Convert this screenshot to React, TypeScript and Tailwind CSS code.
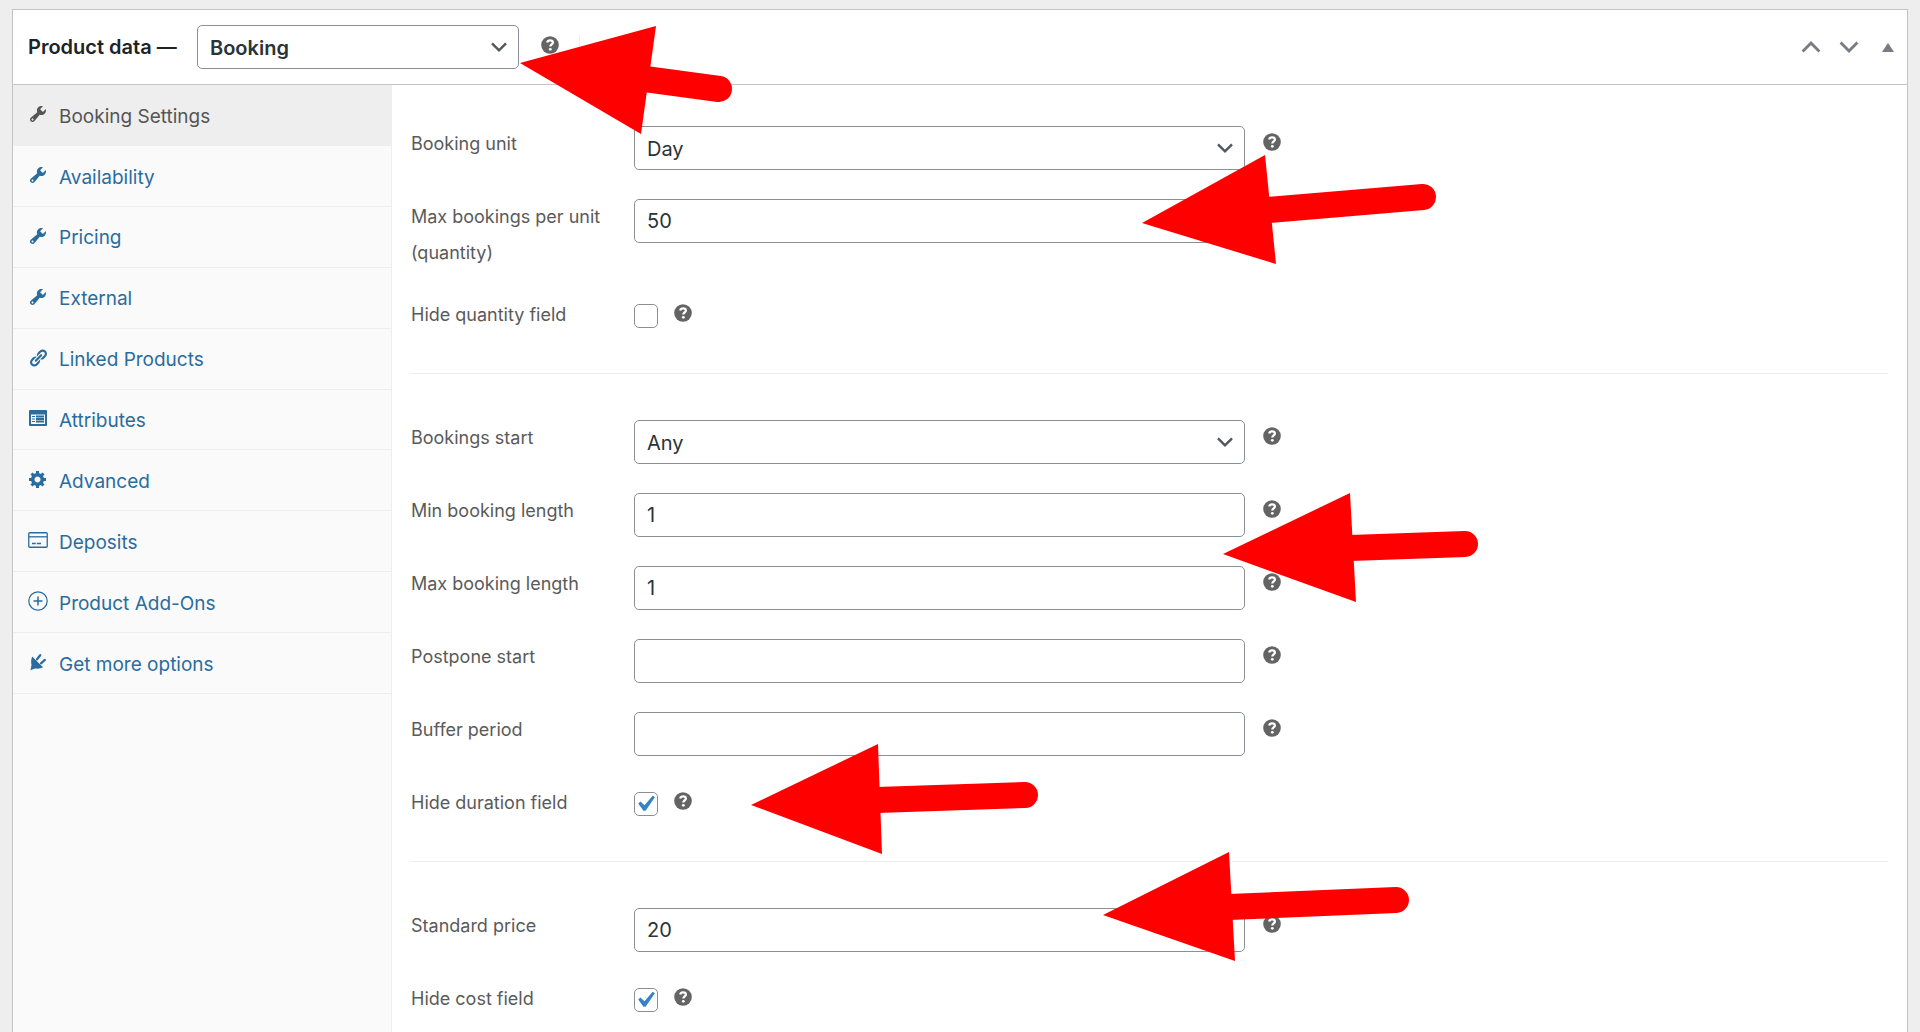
import * as React from 'react';

type IconProps = {className?: string};

type Tab = {
  label: string;
  icon: React.ComponentType<IconProps>;
};

function WrenchIcon({className}: IconProps) {
  return (
    <svg viewBox="0 0 20 20" fill="currentColor" aria-hidden="true" className={className}>
      <path d="M16.68 9.77c-1.34 1.34-3.3 1.67-4.95.99l-5.41 6.52c-.99.99-2.59.99-3.58 0s-.99-2.59 0-3.57l6.52-5.42c-.68-1.65-.35-3.61.99-4.95 1.28-1.28 3.12-1.62 4.72-1.06l-2.89 2.89 2.82 2.82 2.86-2.87c.53 1.58.18 3.39-1.08 4.65zM3.81 16.21c.4.39 1.04.39 1.43 0 .4-.4.4-1.04 0-1.43-.39-.4-1.03-.4-1.43 0-.39.39-.39 1.03 0 1.43z" />
    </svg>
  );
}

function LinkIcon({className}: IconProps) {
  return (
    <svg viewBox="0 0 20 20" fill="currentColor" aria-hidden="true" className={className}>
      <path d="M17.74 2.76c1.68 1.69 1.68 4.41 0 6.1l-1.53 1.52c-1.12 1.12-2.7 1.47-4.14 1.09l2.62-2.61.76-.77.76-.76c.84-.84.84-2.2 0-3.04-.84-.85-2.2-.85-3.04 0l-.77.76-3.38 3.38c-.37-1.44-.02-3.02 1.1-4.14l1.52-1.53c1.69-1.68 4.42-1.68 6.1 0zM8.59 13.43l5.34-5.34c.42-.42.42-1.1 0-1.52-.44-.43-1.13-.39-1.53 0l-5.33 5.34c-.42.42-.42 1.1 0 1.52.44.43 1.13.39 1.52 0zm-.76 2.29l4.14-4.15c.38 1.44.03 3.02-1.09 4.14l-1.52 1.53c-1.69 1.68-4.41 1.68-6.1 0-1.68-1.68-1.68-4.42 0-6.1l1.53-1.52c1.12-1.12 2.7-1.47 4.14-1.1l-4.14 4.15c-.85.84-.85 2.2 0 3.05.84.84 2.2.84 3.04 0z" />
    </svg>
  );
}

function AttributesIcon({className}: IconProps) {
  return (
    <svg viewBox="0 0 20 20" fill="none" aria-hidden="true" className={className}>
      <rect x="1" y="2" width="18" height="16" rx="1" fill="currentColor" />
      <path d="M3 6.500h14v9.500H3z" fill="#fafafa" />
      <path d="M4 8.500h3M4 11h3M4 13.500h3" stroke="currentColor" strokeWidth="1" />
      <path d="M8 8.500h8M8 11h8M8 13.500h8" stroke="currentColor" strokeWidth="1.800" />
    </svg>
  );
}

function GearIcon({className}: IconProps) {
  return (
    <svg viewBox="0 0 20 20" fill="currentColor" aria-hidden="true" className={className}>
      <path d="M18 12h-2.18c-.17.7-.44 1.35-.81 1.93l1.54 1.54-2.1 2.1-1.54-1.54c-.58.36-1.23.63-1.91.79V19H8v-2.18c-.68-.16-1.33-.43-1.91-.79l-1.54 1.54-2.12-2.12 1.54-1.54c-.36-.58-.63-1.23-.79-1.91H1V9.03h2.17c.16-.7.44-1.35.8-1.94L2.43 5.55l2.1-2.1 1.54 1.54c.58-.37 1.24-.64 1.93-.81V2h3v2.18c.68.16 1.33.43 1.91.79l1.54-1.54 2.12 2.12-1.54 1.54c.36.59.64 1.24.8 1.94H18V12zm-8.5 1.5c1.66 0 3-1.34 3-3s-1.34-3-3-3-3 1.34-3 3 1.34 3 3 3z" />
    </svg>
  );
}

function CardIcon({className}: IconProps) {
  return (
    <svg viewBox="0 0 20 20" fill="none" stroke="currentColor" aria-hidden="true" className={className}>
      <rect x="0.75" y="2.750" width="18.500" height="14.500" rx="1" strokeWidth="1.300" />
      <path d="M1 6.800h18" strokeWidth="1.300" />
      <path d="M4 13.500h3.800M8.800 13.500h4.200" strokeWidth="1.300" />
    </svg>
  );
}

function PlusCircleIcon({className}: IconProps) {
  return (
    <svg viewBox="0 0 20 20" fill="none" stroke="currentColor" aria-hidden="true" className={className}>
      <circle cx="10" cy="10" r="9.200" strokeWidth="1.200" />
      <path d="M10 5.500v9M5.500 10h9" strokeWidth="1.500" />
    </svg>
  );
}

function PlugIcon({className}: IconProps) {
  return (
    <svg viewBox="0 0 20 20" fill="currentColor" aria-hidden="true" className={className}>
      <path d="M4.200 4.500 15 15.300c-2.200 1.200-5 1.600-8 1.200L2.500 18.200l1-5.200c-.6-3-.4-6 .7-8.500z" />
      <path d="m9 7.300 3.200-4.100M13 11.300l3.900-3.400" stroke="currentColor" strokeWidth="2.200" strokeLinecap="round" />
    </svg>
  );
}

function HelpTip() {
  return (
    <button type="button" aria-label="Help" className="mt-[7px] size-[18px] shrink-0 text-[#646464]">
      <svg viewBox="0 0 18 18" fill="none" aria-hidden="true" className="size-[18px]">
        <circle cx="9" cy="9" r="8.800" fill="currentColor" />
        <path d="M6.200 6.500c.3-1.400 1.400-2.200 2.900-2.200 1.700 0 2.800.9 2.800 2.200 0 1.800-2.600 1.900-2.600 3.900" stroke="#fff" strokeWidth="2.300" />
        <circle cx="9.300" cy="13.300" r="1.400" fill="#fff" />
      </svg>
    </button>
  );
}

function Chevron({className}: IconProps) {
  return (
    <svg viewBox="0 0 16 10" fill="none" stroke="currentColor" strokeWidth="2.400" aria-hidden="true" className={className}>
      <path d="m1 1.300 7 7 7-7" />
    </svg>
  );
}

const TABS: Tab[] = [
  {label: 'Booking Settings', icon: WrenchIcon},
  {label: 'Availability', icon: WrenchIcon},
  {label: 'Pricing', icon: WrenchIcon},
  {label: 'External', icon: WrenchIcon},
  {label: 'Linked Products', icon: LinkIcon},
  {label: 'Attributes', icon: AttributesIcon},
  {label: 'Advanced', icon: GearIcon},
  {label: 'Deposits', icon: CardIcon},
  {label: 'Product Add-Ons', icon: PlusCircleIcon},
  {label: 'Get more options', icon: PlugIcon},
];

function SelectBox({id, options, bold}: {id: string; options: string[]; bold?: boolean}) {
  return (
    <div className="relative w-full">
      <select
        id={id}
        className={`h-11 w-full appearance-none rounded-[5px] border border-[#8c8f94] bg-white pt-0.5 pr-10 pl-3 text-xl text-[#2c3338] ${bold ? 'font-semibold' : ''}`}
      >
        {options.map((option) => (
          <option key={option}>{option}</option>
        ))}
      </select>
      <Chevron className="pointer-events-none absolute top-[17px] right-3 h-[10px] w-4 text-[#50575e]" />
    </div>
  );
}

function Row({id, label, children}: {id: string; label: string; children: React.ReactNode}) {
  return (
    <div className="flex min-h-[47px] items-start">
      <label htmlFor={id} className="w-[223px] shrink-0 pr-5 text-lg leading-9 text-[#5a5a5a]">
        {label}
      </label>
      {children}
    </div>
  );
}

function SelectRow({id, label, options}: {id: string; label: string; options: string[]}) {
  return (
    <Row id={id} label={label}>
      <div className="flex w-full max-w-[647px] gap-[18px]">
        <SelectBox id={id} options={options} />
        <HelpTip />
      </div>
    </Row>
  );
}

function TextRow({id, label, value = '', help = true}: {id: string; label: string; value?: string; help?: boolean}) {
  return (
    <Row id={id} label={label}>
      <div className="flex w-full max-w-[647px] gap-[18px]">
        <input
          id={id}
          type="text"
          defaultValue={value}
          className="h-11 w-full max-w-[611px] rounded-[5px] border border-[#8c8f94] bg-white px-3 text-xl text-[#2c3338]"
        />
        {help && <HelpTip />}
      </div>
    </Row>
  );
}

function CheckRow({id, label, checked = false}: {id: string; label: string; checked?: boolean}) {
  return (
    <Row id={id} label={label}>
      <div className="flex gap-4">
        <span className="relative mt-[7px] size-6">
          <input
            id={id}
            type="checkbox"
            defaultChecked={checked}
            className="peer block size-6 appearance-none rounded-[5px] border border-[#8c8f94] bg-white"
          />
          <svg
            viewBox="0 0 20 20"
            aria-hidden="true"
            className="pointer-events-none absolute -top-1 -left-[5px] hidden size-8 peer-checked:block"
          >
            <path d="M14.830 4.890l1.340.940-5.810 8.380H9.020L5.780 9.670l1.340-1.250 2.570 2.400z" fill="#3582c4" />
          </svg>
        </span>
        <HelpTip />
      </div>
    </Row>
  );
}

// Callouts drawn over the panel: head polygon plus a round-capped shaft.
const ARROWS = [
  {head: '520,63 656,26 641,134', shaft: 'M645 79 719 89'},
  {head: '1142,223 1265,155 1276,264', shaft: 'M1268 210 1423 197'},
  {head: '1223,554 1350,493 1356,602', shaft: 'M1350 548 1465 544'},
  {head: '751,805 878,744 882,854', shaft: 'M877 800 1025 795'},
  {head: '1103,915 1229,852 1235,961', shaft: 'M1229 907 1396 900'},
];

export default function App() {
  return (
    <div className="relative flex h-screen flex-col overflow-hidden bg-[#eeeeee] px-3 pt-[9px] font-['Inter',sans-serif]">
      <section className="flex grow flex-col border border-b-0 border-[#c3c4c7] bg-white">
        <header className="flex h-[75px] shrink-0 items-center border-b border-[#c3c4c7] pr-[13px] pl-[15px]">
          <label htmlFor="product-type" className="w-[169px] shrink-0 text-xl font-semibold whitespace-nowrap text-[#1d2327]">
            Product data —
          </label>
          <div className="w-[322px]">
            <SelectBox id="product-type" options={['Booking', 'Simple product', 'Variable product']} bold />
          </div>
          <div className="ml-[22px] flex h-9 gap-5">
            <HelpTip />
            <span className="mt-1.5 h-5 w-px bg-[#eeeeee]" />
          </div>
          <div className="ml-auto flex items-center gap-[18px] text-[#787c82]">
            <button type="button" aria-label="Move up">
              <Chevron className="h-3 w-5 rotate-180" />
            </button>
            <button type="button" aria-label="Move down">
              <Chevron className="h-3 w-5" />
            </button>
            <button type="button" aria-label="Toggle panel" className="ml-[5px]">
              <svg viewBox="0 0 12 9" fill="currentColor" aria-hidden="true" className="h-[9px] w-3">
                <path d="M6 0 12 9H0z" />
              </svg>
            </button>
          </div>
        </header>

        <div className="flex grow">
          <nav className="w-[379px] shrink-0 border-r border-[#eeeeee] bg-[#fafafa]">
            <ul className="grid h-[609px] auto-rows-fr">
              {TABS.map(({label, icon: Icon}, i) => (
                <li key={label} className="border-b border-[#eeeeee]">
                  <a
                    href="#"
                    className={`flex h-full items-center gap-[11px] pt-1 pl-[15px] text-[19px] ${i === 0 ? 'bg-[#eeeeee] text-[#555555]' : 'text-[#2a6c9e]'}`}
                  >
                    <Icon className="mb-1.5 size-5" />
                    {label}
                  </a>
                </li>
              ))}
            </ul>
          </nav>

          <form className="grow px-[19px]">
            <div className="flex flex-col gap-[26px] border-b border-[#eeeeee] pt-[41px] pb-[29px]">
              <SelectRow id="unit" label="Booking unit" options={['Day', 'Night']} />
              <TextRow id="max-per-unit" label="Max bookings per unit (quantity)" value="50" help={false} />
              <CheckRow id="hide-quantity" label="Hide quantity field" />
            </div>
            <div className="flex flex-col gap-[26px] border-b border-[#eeeeee] pt-[46px] pb-[29px]">
              <SelectRow id="start" label="Bookings start" options={['Any', 'Monday']} />
              <TextRow id="min-length" label="Min booking length" value="1" />
              <TextRow id="max-length" label="Max booking length" value="1" />
              <TextRow id="postpone" label="Postpone start" />
              <TextRow id="buffer" label="Buffer period" />
              <CheckRow id="hide-duration" label="Hide duration field" checked />
            </div>
            <div className="flex flex-col gap-[26px] pt-[46px]">
              <TextRow id="price" label="Standard price" value="20" />
              <CheckRow id="hide-cost" label="Hide cost field" checked />
            </div>
          </form>
        </div>
      </section>

      <svg viewBox="0 0 1920 1032" aria-hidden="true" className="pointer-events-none absolute top-0 left-0 h-[1032px] w-[1920px] max-w-none">
        {ARROWS.map(({head, shaft}) => (
          <g key={head}>
            <polygon points={head} fill="#ff0000" />
            <path d={shaft} stroke="#ff0000" strokeWidth="26" strokeLinecap="round" />
          </g>
        ))}
      </svg>
    </div>
  );
}
